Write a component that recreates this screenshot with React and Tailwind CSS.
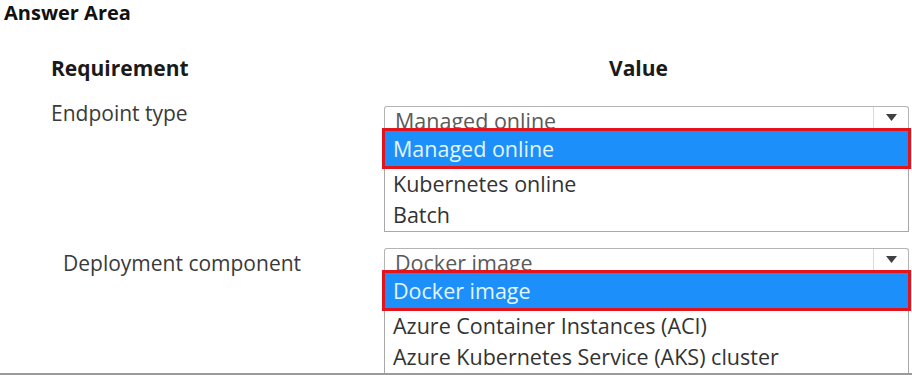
import React from "react";

const rows = [
    {
        label: "Endpoint type",
        labelPad: "pl-[51px]",
        selected: "Managed online",
        options: ["Kubernetes online", "Batch"],
        gap: "mt-[21px]",
        labelTop: "mt-0",
        boxTop: "mt-[5px]",
    },
    {
        label: "Deployment component",
        labelPad: "pl-[63px]",
        selected: "Docker image",
        options: ["Azure Container Instances (ACI)", "Azure Kubernetes Service (AKS) cluster"],
        gap: "mt-[16px]",
        labelTop: "mt-[3px]",
        boxTop: "mt-0",
    },
];

function Dropdown({ selected, options }) {
    return (
        <div className="w-[525px] flex flex-col">
            {/* closed select */}
            <div className="h-[22px] flex border-t border-x border-[#b4b4b4] rounded-t-[3px] bg-white">
                <div className="flex-1 pl-[10px] pt-[3px] text-[21.5px] leading-[22px] text-[#5a5a5a] whitespace-nowrap">
                    {selected}
                </div>
                <div className="w-[35px] border-l border-[#dcdcdc] flex items-center justify-center">
                    <svg width="11" height="7" viewBox="0 0 11 7">
                        <path d="M0 0 L11 0 L5.5 7 Z" fill="#404040" />
                    </svg>
                </div>
            </div>
            {/* highlighted option, outlined in red */}
            <div className="relative z-10 -mx-[2px] h-[41px] border-[3px] border-[#e3141c] bg-[#1c8ffa] pl-[8px] flex items-center">
                <span className="text-[21.5px] leading-[24px] text-[#e2f6ff] whitespace-nowrap">{selected}</span>
            </div>
            <div className="border-x border-b border-[#a8a8a8] bg-white">
                {options.map((opt) => (
                    <div key={opt} className="h-[31px] pl-[8px] flex items-center text-[21.5px] text-[#333] whitespace-nowrap">
                        {opt}
                    </div>
                ))}
            </div>
        </div>
    );
}

export default function App() {
    return (
        <div
            className="w-[912px] h-[375px] bg-white overflow-hidden border-b-2 border-[#9a9a9a]"
            style={{ fontFamily: '"Open Sans", "Noto Sans", sans-serif' }}
        >
            <div className="pl-[4px] text-[20px] leading-[26px] font-bold text-[#111]">Answer Area</div>

            <div className="mt-[30px] flex text-[21px] leading-[24px] font-bold text-[#1a1a1a]">
                <div className="w-[365px] pl-[51px]">Requirement</div>
                <div className="flex-1 text-center">Value</div>
            </div>

            {rows.map((row) => (
                <div key={row.label} className={`${row.gap} flex`}>
                    <div className={`w-[384px] ${row.labelPad} ${row.labelTop} text-[21px] leading-[24px] text-[#3a3a3a]`}>
                        {row.label}
                    </div>
                    <div className={row.boxTop}>
                        <Dropdown selected={row.selected} options={row.options} />
                    </div>
                </div>
            ))}
        </div>
    );
}
